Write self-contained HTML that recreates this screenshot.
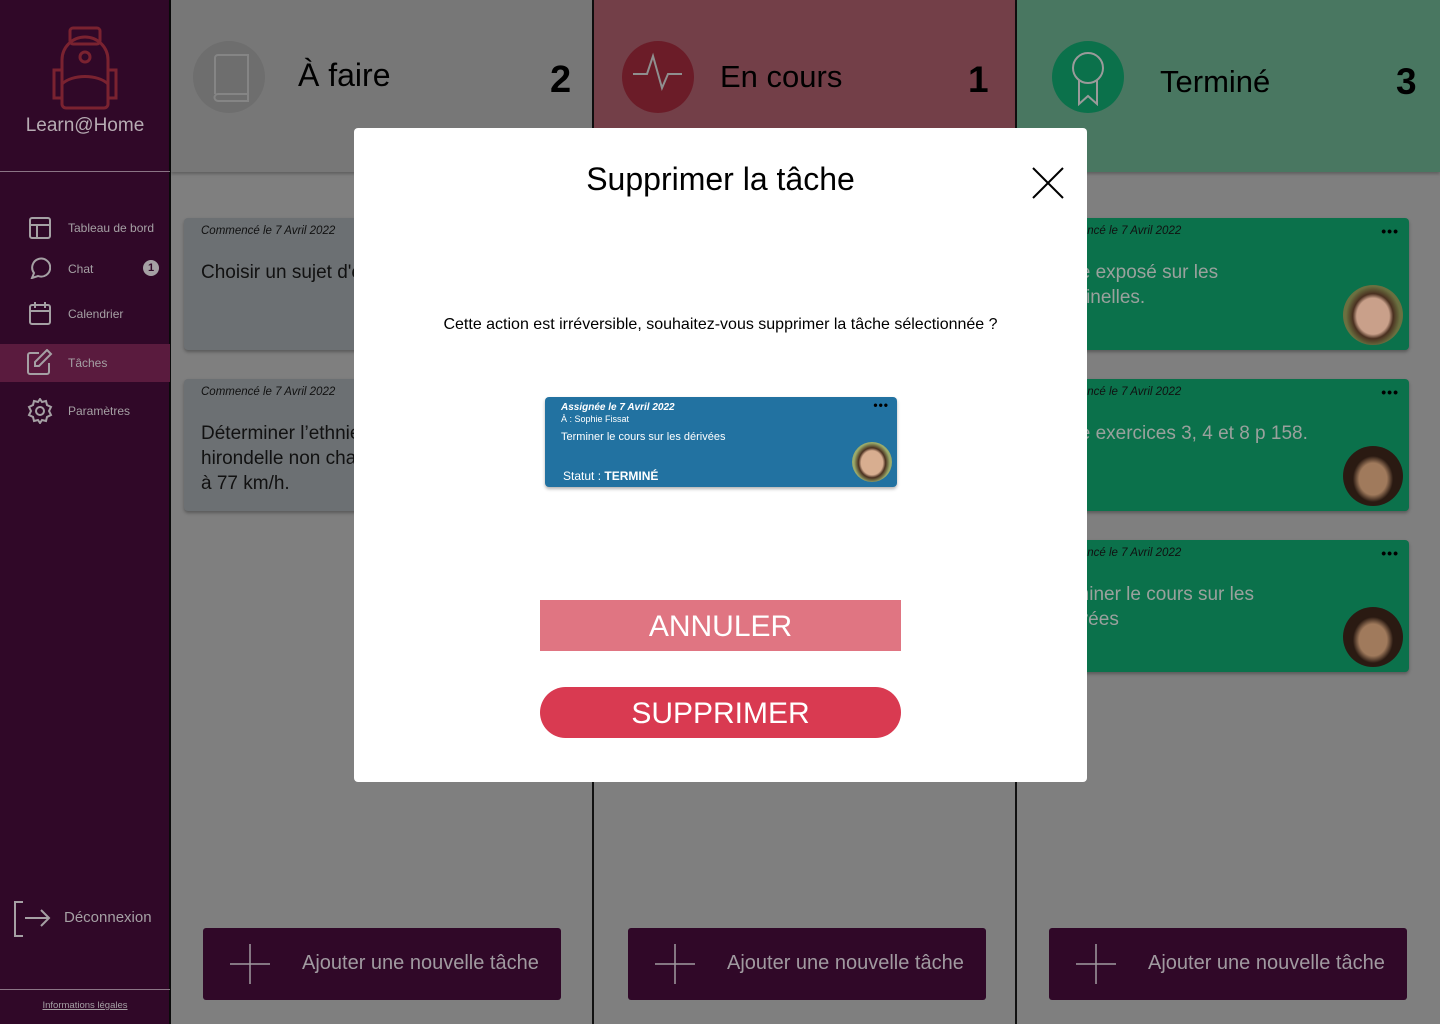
<!DOCTYPE html>
<html><head><meta charset="utf-8"><style>
*{margin:0;padding:0;box-sizing:border-box}
body{width:1440px;height:1024px;position:relative;overflow:hidden;background:#7f7f7f;font-family:"Liberation Sans",sans-serif}
.a{position:absolute}
.sb{left:0;top:0;width:171px;height:1024px;background:#300828;border-right:2px solid #0a0a0a}
.nav{color:#a5a0a4;font-size:12px}
.col{top:0;height:1024px;border-right:2px solid #111}
.hd{top:0;height:172px;box-shadow:0 2px 3px rgba(0,0,0,.25)}
.card{border-radius:4px;box-shadow:0 2px 3px rgba(0,0,0,.3);height:132px;width:379px}
.date{font-size:11.5px;font-style:italic;color:#111}
.ttl{font-size:19px;color:#111;line-height:25px}
.gt{color:#9aa19d}
.add{width:358px;height:72px;background:#300828;border-radius:3px;color:#a09aa0;font-size:20px}
.dots{font-size:14px;letter-spacing:1px;color:#000;font-weight:bold}
.av{width:60px;height:60px;border-radius:50%}
</style></head><body>
<div class="a sb">
  <svg class="a" style="left:46px;top:26px" width="78" height="84" viewBox="0 0 78 84" fill="none" stroke="#7a2230" stroke-width="3">
    <rect x="24" y="2" width="30" height="16" rx="3"/><path d="M16 70V34a23 23 0 0 1 46 0v36"/><path d="M8 44h8v28H8z M62 44h8v28h-8z"/><path d="M16 58c10-10 36-10 46 0v20a4 4 0 0 1-4 4H20a4 4 0 0 1-4-4z"/><circle cx="39" cy="31" r="5"/>
  </svg>
  <div class="a" style="left:0;width:170px;top:115px;text-align:center;color:#b6abb2;font-size:19px">Learn@Home</div>
  <div class="a" style="left:0;top:171px;width:170px;height:1px;background:#8a7585"></div>
  <svg class="a" style="left:29px;top:217px" width="22" height="22" fill="none" stroke="#a5a0a4" stroke-width="2"><rect x="1" y="1" width="20" height="20" rx="2"/><path d="M1 8h20M8 8v13"/></svg>
  <div class="a nav" style="left:68px;top:221px">Tableau de bord</div>
  <svg class="a" style="left:29px;top:257px" width="22" height="22" fill="none" stroke="#a5a0a4" stroke-width="2"><path d="M3 21l2-5a9 9 0 1 1 4 3z"/></svg>
  <div class="a nav" style="left:68px;top:262px">Chat</div>
  <div class="a" style="left:143px;top:260px;width:16px;height:16px;border-radius:50%;background:#a5a0a4;color:#300828;font-size:11px;font-weight:bold;text-align:center;line-height:16px">1</div>
  <svg class="a" style="left:29px;top:301px" width="22" height="24" fill="none" stroke="#a5a0a4" stroke-width="2"><rect x="1" y="4" width="20" height="19" rx="2"/><path d="M1 10h20M6 1v6M16 1v6"/></svg>
  <div class="a nav" style="left:68px;top:307px">Calendrier</div>
  <div class="a" style="left:0;top:344px;width:170px;height:38px;background:#5a1b3e"></div>
  <svg class="a" style="left:27px;top:349px" width="26" height="26" fill="none" stroke="#a5a0a4" stroke-width="2"><path d="M12 4H3a2 2 0 0 0-2 2v17a2 2 0 0 0 2 2h17a2 2 0 0 0 2-2v-9"/><path d="M20 1l4 4-12 12H8v-4z"/></svg>
  <div class="a nav" style="left:68px;top:356px">Tâches</div>
  <svg class="a" style="left:27px;top:398px" width="26" height="26" fill="none" stroke="#a5a0a4" stroke-width="2"><circle cx="13" cy="13" r="4"/><path d="M13 1l2 3 4-1 1 4 4 2-2 4 2 4-4 2-1 4-4-1-2 3-2-3-4 1-1-4-4-2 2-4-2-4 4-2 1-4 4 1z"/></svg>
  <div class="a nav" style="left:68px;top:404px">Paramètres</div>
  <svg class="a" style="left:13px;top:900px" width="38" height="38" fill="none" stroke="#a5a0a4" stroke-width="2"><path d="M10 2H2v34h8M12 18h24M28 10l8 8-8 8"/></svg>
  <div class="a" style="left:64px;top:909px;color:#a5a0a4;font-size:15px">Déconnexion</div>
  <div class="a" style="left:0;top:989px;width:170px;height:1px;background:#8a7585"></div>
  <div class="a" style="left:0;width:170px;top:1000px;text-align:center;color:#a5a0a4;font-size:9.5px;text-decoration:underline">Informations légales</div>
</div>

<div class="a col" style="left:171px;width:423px"></div>
<div class="a col" style="left:594px;width:423px"></div>
<div class="a hd" style="left:171px;width:421px;background:#777"></div>
<div class="a hd" style="left:594px;width:421px;background:#733f48"></div>
<div class="a hd" style="left:1017px;width:423px;background:#497761"></div>

<div class="a" style="left:193px;top:41px;width:72px;height:72px;border-radius:50%;background:#6e6e6e"></div>
<svg class="a" style="left:211px;top:54px" width="38" height="48" fill="none" stroke="#858585" stroke-width="2"><path d="M4 40V4a3 3 0 0 1 3-3h30v46H7a3 3 0 0 1 0-7h30"/></svg>
<div class="a" style="left:298px;top:57px;font-size:32px;color:#000">À faire</div>
<div class="a" style="left:550px;top:59px;font-size:38px;font-weight:bold;color:#000">2</div>

<div class="a" style="left:622px;top:41px;width:72px;height:72px;border-radius:50%;background:#6b1c28"></div>
<svg class="a" style="left:632px;top:52px" width="52" height="46" fill="none" stroke="#8f8f8f" stroke-width="2"><path d="M1 22h14l6-18 9 32 6-14h14"/></svg>
<div class="a" style="left:720px;top:59px;font-size:31px;color:#000">En cours</div>
<div class="a" style="left:968px;top:59px;font-size:37px;font-weight:bold;color:#000">1</div>

<div class="a" style="left:1052px;top:41px;width:72px;height:72px;border-radius:50%;background:#0b714b"></div>
<svg class="a" style="left:1070px;top:50px" width="36" height="56" fill="none" stroke="#9a9a9a" stroke-width="2"><circle cx="18" cy="18" r="15"/><path d="M9 30v24l9-8 9 8V30"/></svg>
<div class="a" style="left:1160px;top:64px;font-size:31px;color:#000">Terminé</div>
<div class="a" style="left:1396px;top:61px;font-size:37px;font-weight:bold;color:#000">3</div>

<div class="a card" style="left:184px;top:218px;background:#6c7073">
  <div class="a date" style="left:17px;top:7px">Commencé le 7 Avril 2022</div>
  <div class="a ttl" style="left:17px;top:42px">Choisir un sujet d'exposé</div>
</div>
<div class="a card" style="left:184px;top:379px;background:#6c7073">
  <div class="a date" style="left:17px;top:7px">Commencé le 7 Avril 2022</div>
  <div class="a ttl" style="left:17px;top:42px">Déterminer l’ethnie d’une<br>hirondelle non chargée volant<br>à 77 km/h.</div>
</div>

<div class="a card" style="left:1030px;top:218px;background:#0b714b">
  <div class="a date" style="left:17px;top:7px">Commencé le 7 Avril 2022</div><div class="a dots" style="right:10px;top:5px">•••</div>
  <div class="a ttl gt" style="left:17px;top:42px">Faire exposé sur les<br>coccinelles.</div>
  <div class="a av" style="left:313px;top:67px;background:radial-gradient(ellipse 45% 50% at 50% 52%,#c9a08a 0 60%,#4a3020 75%,#6a7040 100%)"></div>
</div>
<div class="a card" style="left:1030px;top:379px;background:#0b714b">
  <div class="a date" style="left:17px;top:7px">Commencé le 7 Avril 2022</div><div class="a dots" style="right:10px;top:5px">•••</div>
  <div class="a ttl gt" style="left:17px;top:42px">Faire exercices 3, 4 et 8 p 158.</div>
  <div class="a av" style="left:313px;top:67px;background:radial-gradient(ellipse 42% 48% at 50% 55%,#a07a5c 0 55%,#2a1a12 80%)"></div>
</div>
<div class="a card" style="left:1030px;top:540px;background:#0b714b">
  <div class="a date" style="left:17px;top:7px">Commencé le 7 Avril 2022</div><div class="a dots" style="right:10px;top:5px">•••</div>
  <div class="a ttl gt" style="left:17px;top:42px">Terminer le cours sur les<br>dérivées</div>
  <div class="a av" style="left:313px;top:67px;background:radial-gradient(ellipse 42% 48% at 50% 55%,#a07a5c 0 55%,#2a1a12 80%)"></div>
</div>

<div class="a add" style="left:203px;top:928px"><svg class="a" style="left:27px;top:16px" width="40" height="40" stroke="#a09aa0" stroke-width="1.5"><path d="M20 0v40M0 20h40"/></svg><div class="a" style="left:99px;top:24px">Ajouter une nouvelle tâche</div></div>
<div class="a add" style="left:628px;top:928px"><svg class="a" style="left:27px;top:16px" width="40" height="40" stroke="#a09aa0" stroke-width="1.5"><path d="M20 0v40M0 20h40"/></svg><div class="a" style="left:99px;top:24px">Ajouter une nouvelle tâche</div></div>
<div class="a add" style="left:1049px;top:928px"><svg class="a" style="left:27px;top:16px" width="40" height="40" stroke="#a09aa0" stroke-width="1.5"><path d="M20 0v40M0 20h40"/></svg><div class="a" style="left:99px;top:24px">Ajouter une nouvelle tâche</div></div>

<div class="a" style="left:354px;top:128px;width:733px;height:654px;background:#fff;border-radius:4px">
  <div class="a" style="left:0;width:733px;top:33px;text-align:center;font-size:32px;color:#000">Supprimer la tâche</div>
  <svg class="a" style="left:678px;top:39px" width="32" height="32" stroke="#000" stroke-width="2"><path d="M1 1l30 30M31 1L1 31"/></svg>
  <div class="a" style="left:0;width:733px;top:188px;text-align:center;font-size:16px;color:#000">Cette action est irréversible, souhaitez-vous supprimer la tâche sélectionnée ?</div>
  <div class="a" style="left:191px;top:269px;width:352px;height:90px;background:#2272a1;border-radius:4px;box-shadow:0 2px 3px rgba(0,0,0,.3);color:#fff">
    <div class="a" style="left:16px;top:5px;font-size:10px;font-style:italic;font-weight:bold">Assignée le 7 Avril 2022</div>
    <div class="a" style="left:16px;top:17px;font-size:9px">À : Sophie Fissat</div>
    <div class="a" style="left:16px;top:34px;font-size:11px">Terminer le cours sur les dérivées</div>
    <div class="a" style="left:18px;top:72px;font-size:12px">Statut : <b>TERMINÉ</b></div>
    <div class="a" style="right:8px;top:1px;font-size:12px;font-weight:bold;color:#000;letter-spacing:1px">•••</div>
    <div class="a" style="left:307px;top:45px;width:40px;height:40px;border-radius:50%;background:radial-gradient(ellipse 45% 50% at 50% 52%,#d8ae90 0 60%,#4a3020 75%,#9aaa6a 100%)"></div>
  </div>
  <div class="a" style="left:186px;top:472px;width:361px;height:51px;background:#e07582;color:#fff;font-size:30px;text-align:center;line-height:53px">ANNULER</div>
  <div class="a" style="left:186px;top:559px;width:361px;height:51px;background:#d93a51;border-radius:26px;color:#fff;font-size:30px;text-align:center;line-height:53px">SUPPRIMER</div>
</div>
</body></html>
